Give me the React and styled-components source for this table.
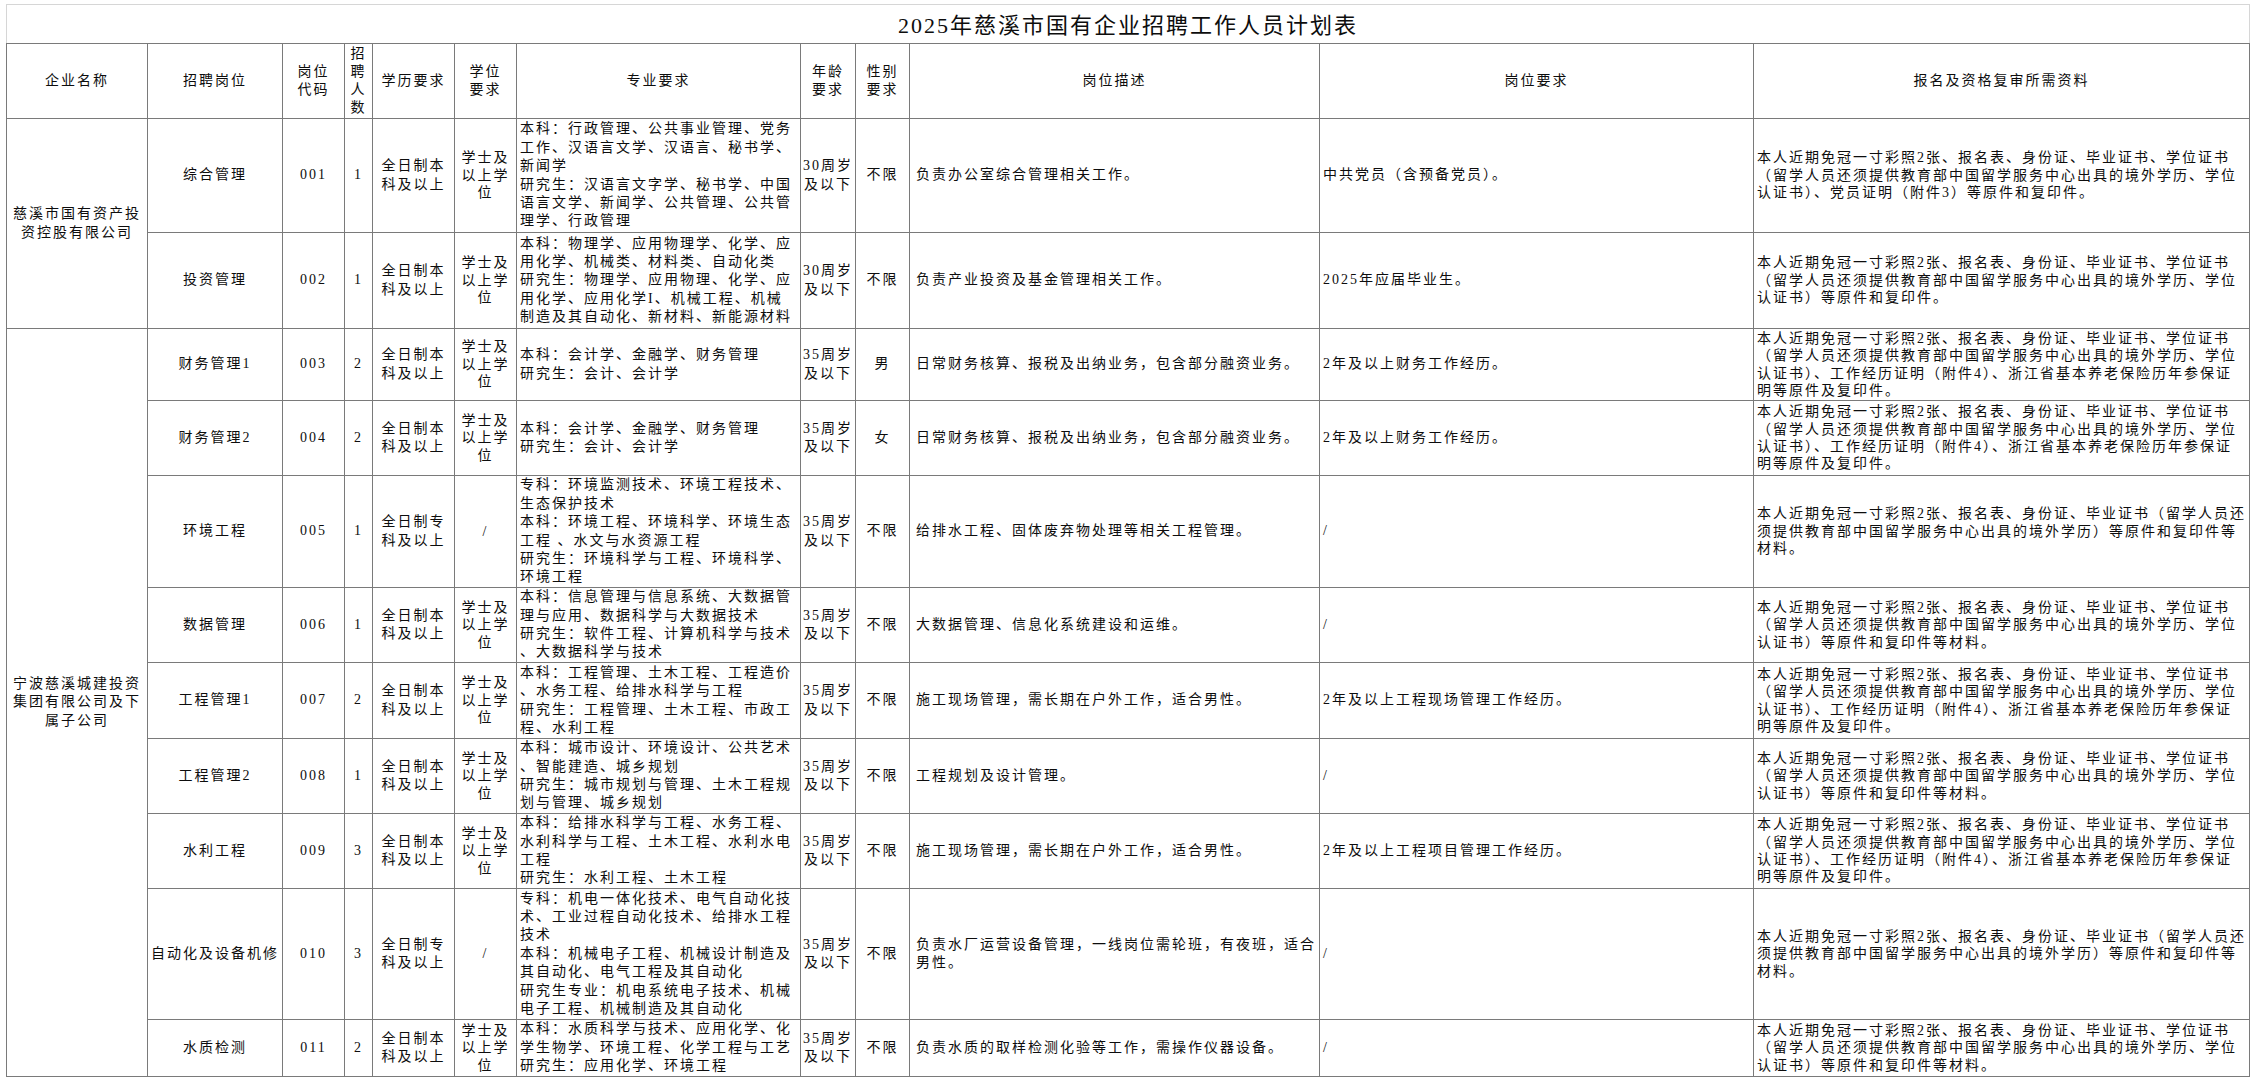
import React from "react";
import styled, { createGlobalStyle } from "styled-components";

const GlobalStyle = createGlobalStyle`
  html, body {
    margin: 0;
    padding: 0;
    background: #fff;
  }
  body {
    font-family: "Liberation Serif", "Noto Sans CJK SC", serif;
    color: #0d0d0d;
  }
`;

const Page = styled.div`
  padding: 4px 6px 0 6px;
`;

const Sheet = styled.table`
  width: 2243px;
  table-layout: fixed;
  border-collapse: collapse;
  font-size: 14px;
  letter-spacing: 2px;
  line-height: 18.4px;
`;

const TitleCell = styled.td`
  height: 34px;
  padding: 4px 0 0 0;
  border: 1px solid #d6d6d6;
  border-bottom: 1px solid #7a7a7a;
  text-align: center;
  vertical-align: middle;
  font-size: 22px;
  line-height: 30px;
  letter-spacing: 2px;
  overflow: hidden;
`;

const HeadRow = styled.tr`
  height: 75px;
`;

const HeadCell = styled.th`
  font-weight: normal;
  border: 1px solid #7a7a7a;
  padding: 0;
  text-align: center;
  vertical-align: middle;
  white-space: nowrap;
`;

const Row = styled.tr`
  height: ${(p) => p.$h}px;
`;

const Cell = styled.td`
  border: 1px solid #7a7a7a;
  padding: 0 0 0 ${(p) => p.$pad || 0}px;
  text-align: ${(p) => p.$align || "center"};
  vertical-align: middle;
  white-space: nowrap;
  overflow: hidden;
`;

const Line = styled.span`
  display: block;
  height: ${(p) => p.$lh || 18.4}px;
  line-height: ${(p) => p.$lh || 18.4}px;
  overflow: visible;
`;

const Lines = ({ items, lh }) => (
  <>
    {items.map((t, i) => (
      <Line key={i} $lh={lh}>
        {t}
      </Line>
    ))}
  </>
);

const widths = [141, 135, 62, 28, 82, 62, 284, 55, 54, 410, 434, 496];

const headers = [
  ["企业名称"],
  ["招聘岗位"],
  ["岗位", "代码"],
  ["招", "聘", "人", "数"],
  ["学历要求"],
  ["学位", "要求"],
  ["专业要求"],
  ["年龄", "要求"],
  ["性别", "要求"],
  ["岗位描述"],
  ["岗位要求"],
  ["报名及资格复审所需资料"],
];

const DOC_HEAD = "本人近期免冠一寸彩照2张、报名表、身份证、毕业证书、学位证书";
const DOC_ABROAD = "（留学人员还须提供教育部中国留学服务中心出具的境外学历、学位";

const docs = {
  party: [DOC_HEAD, DOC_ABROAD, "认证书）、党员证明（附件3）等原件和复印件。"],
  plain: [DOC_HEAD, DOC_ABROAD, "认证书）等原件和复印件。"],
  work: [
    DOC_HEAD,
    DOC_ABROAD,
    "认证书）、工作经历证明（附件4）、浙江省基本养老保险历年参保证",
    "明等原件及复印件。",
  ],
  college: [
    "本人近期免冠一寸彩照2张、报名表、身份证、毕业证书（留学人员还",
    "须提供教育部中国留学服务中心出具的境外学历）等原件和复印件等",
    "材料。",
  ],
  material: [DOC_HEAD, DOC_ABROAD, "认证书）等原件和复印件等材料。"],
};

const BK = ["全日制本", "科及以上"];
const ZK = ["全日制专", "科及以上"];
const XS = ["学士及", "以上学", "位"];

const groups = [
  {
    company: ["慈溪市国有资产投", "资控股有限公司"],
    rows: [
      {
        h: 114, pos: "综合管理", code: "001", num: "1", edu: BK, deg: XS,
        major: [
          "本科：行政管理、公共事业管理、党务",
          "工作、汉语言文学、汉语言、秘书学、",
          "新闻学",
          "研究生：汉语言文字学、秘书学、中国",
          "语言文学、新闻学、公共管理、公共管",
          "理学、行政管理",
        ],
        age: "30", sex: "不限",
        desc: ["负责办公室综合管理相关工作。"],
        req: "中共党员（含预备党员）。",
        docs: docs.party,
      },
      {
        h: 96, pos: "投资管理", code: "002", num: "1", edu: BK, deg: XS,
        major: [
          "本科：物理学、应用物理学、化学、应",
          "用化学、机械类、材料类、自动化类",
          "研究生：物理学、应用物理、化学、应",
          "用化学、应用化学I、机械工程、机械",
          "制造及其自动化、新材料、新能源材料",
        ],
        age: "30", sex: "不限",
        desc: ["负责产业投资及基金管理相关工作。"],
        req: "2025年应届毕业生。",
        docs: docs.plain,
      },
    ],
  },
  {
    company: ["宁波慈溪城建投资", "集团有限公司及下", "属子公司"],
    rows: [
      {
        h: 72, pos: "财务管理1", code: "003", num: "2", edu: BK, deg: XS,
        major: ["本科：会计学、金融学、财务管理", "研究生：会计、会计学"],
        age: "35", sex: "男",
        desc: ["日常财务核算、报税及出纳业务，包含部分融资业务。"],
        req: "2年及以上财务工作经历。",
        docs: docs.work,
      },
      {
        h: 75, pos: "财务管理2", code: "004", num: "2", edu: BK, deg: XS,
        major: ["本科：会计学、金融学、财务管理", "研究生：会计、会计学"],
        age: "35", sex: "女",
        desc: ["日常财务核算、报税及出纳业务，包含部分融资业务。"],
        req: "2年及以上财务工作经历。",
        docs: docs.work,
      },
      {
        h: 112, pos: "环境工程", code: "005", num: "1", edu: ZK, deg: ["/"],
        major: [
          "专科：环境监测技术、环境工程技术、",
          "生态保护技术",
          "本科：环境工程、环境科学、环境生态",
          "工程 、水文与水资源工程",
          "研究生：环境科学与工程、环境科学、",
          "环境工程",
        ],
        age: "35", sex: "不限",
        desc: ["给排水工程、固体废弃物处理等相关工程管理。"],
        req: "/",
        docs: docs.college,
      },
      {
        h: 75, pos: "数据管理", code: "006", num: "1", edu: BK, deg: XS,
        major: [
          "本科：信息管理与信息系统、大数据管",
          "理与应用、数据科学与大数据技术",
          "研究生：软件工程、计算机科学与技术",
          "、大数据科学与技术",
        ],
        age: "35", sex: "不限",
        desc: ["大数据管理、信息化系统建设和运维。"],
        req: "/",
        docs: docs.material,
      },
      {
        h: 76, pos: "工程管理1", code: "007", num: "2", edu: BK, deg: XS,
        major: [
          "本科：工程管理、土木工程、工程造价",
          "、水务工程、给排水科学与工程",
          "研究生：工程管理、土木工程、市政工",
          "程、水利工程",
        ],
        age: "35", sex: "不限",
        desc: ["施工现场管理，需长期在户外工作，适合男性。"],
        req: "2年及以上工程现场管理工作经历。",
        docs: docs.work,
      },
      {
        h: 75, pos: "工程管理2", code: "008", num: "1", edu: BK, deg: XS,
        major: [
          "本科：城市设计、环境设计、公共艺术",
          "、智能建造、城乡规划",
          "研究生：城市规划与管理、土木工程规",
          "划与管理、城乡规划",
        ],
        age: "35", sex: "不限",
        desc: ["工程规划及设计管理。"],
        req: "/",
        docs: docs.material,
      },
      {
        h: 75, pos: "水利工程", code: "009", num: "3", edu: BK, deg: XS,
        major: [
          "本科：给排水科学与工程、水务工程、",
          "水利科学与工程、土木工程、水利水电",
          "工程",
          "研究生：水利工程、土木工程",
        ],
        age: "35", sex: "不限",
        desc: ["施工现场管理，需长期在户外工作，适合男性。"],
        req: "2年及以上工程项目管理工作经历。",
        docs: docs.work,
      },
      {
        h: 131, pos: "自动化及设备机修", code: "010", num: "3", edu: ZK, deg: ["/"],
        major: [
          "专科：机电一体化技术、电气自动化技",
          "术、工业过程自动化技术、给排水工程",
          "技术",
          "本科：机械电子工程、机械设计制造及",
          "其自动化、电气工程及其自动化",
          "研究生专业：机电系统电子技术、机械",
          "电子工程、机械制造及其自动化",
        ],
        age: "35", sex: "不限",
        desc: ["负责水厂运营设备管理，一线岗位需轮班，有夜班，适合", "男性。"],
        req: "/",
        docs: docs.college,
      },
      {
        h: 57, pos: "水质检测", code: "011", num: "2", edu: BK, deg: XS,
        major: [
          "本科：水质科学与技术、应用化学、化",
          "学生物学、环境工程、化学工程与工艺",
          "研究生：应用化学、环境工程",
        ],
        age: "35", sex: "不限",
        desc: ["负责水质的取样检测化验等工作，需操作仪器设备。"],
        req: "/",
        docs: docs.material,
      },
    ],
  },
];

const JobRow = ({ row, company, span }) => (
  <Row $h={row.h}>
    {company && (
      <Cell rowSpan={span}>
        <Lines items={company} />
      </Cell>
    )}
    <Cell>
      <Lines items={[row.pos]} />
    </Cell>
    <Cell>
      <Lines items={[row.code]} />
    </Cell>
    <Cell>
      <Lines items={[row.num]} />
    </Cell>
    <Cell>
      <Lines items={row.edu} />
    </Cell>
    <Cell>
      <Lines items={row.deg} lh={17.6} />
    </Cell>
    <Cell $align="left" $pad={3}>
      <Lines items={row.major} />
    </Cell>
    <Cell>
      <Lines items={[`${row.age}周岁`, "及以下"]} />
    </Cell>
    <Cell>
      <Lines items={[row.sex]} />
    </Cell>
    <Cell $align="left" $pad={6}>
      <Lines items={row.desc} />
    </Cell>
    <Cell $align="left" $pad={3}>
      <Lines items={[row.req]} />
    </Cell>
    <Cell $align="left" $pad={3}>
      <Lines items={row.docs} lh={17.4} />
    </Cell>
  </Row>
);

export default function App() {
  return (
    <Page>
      <GlobalStyle />
      <Sheet>
        <colgroup>
          {widths.map((w, i) => (
            <col key={i} style={{ width: w }} />
          ))}
        </colgroup>
        <tbody>
          <tr>
            <TitleCell colSpan={12}>2025年慈溪市国有企业招聘工作人员计划表</TitleCell>
          </tr>
          <HeadRow>
            {headers.map((h, i) => (
              <HeadCell key={i}>
                <Lines items={h} lh={18.2} />
              </HeadCell>
            ))}
          </HeadRow>
          {groups.map((g) =>
            g.rows.map((row, i) => (
              <JobRow
                key={row.code}
                row={row}
                company={i === 0 ? g.company : null}
                span={g.rows.length}
              />
            ))
          )}
        </tbody>
      </Sheet>
    </Page>
  );
}
